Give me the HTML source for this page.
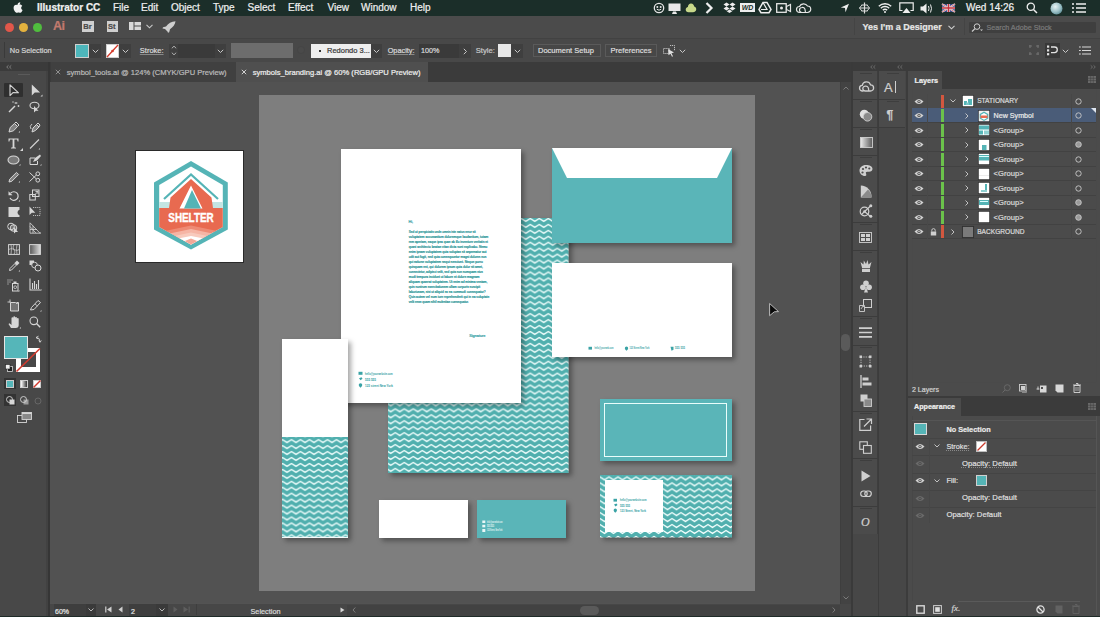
<!DOCTYPE html>
<html><head><meta charset="utf-8">
<style>
*{margin:0;padding:0;box-sizing:border-box}
html,body{width:1100px;height:617px;overflow:hidden;background:#535353;font-family:"Liberation Sans",sans-serif}
.a{position:absolute}
.t{position:absolute;white-space:nowrap;line-height:1;-webkit-text-stroke:0.22px}
svg{position:absolute;overflow:visible}
</style></head><body>
<!-- MENUBAR -->
<div class="a" style="left:0;top:0;width:1100px;height:15.6px;background:#1b2e29"></div>
<svg style="left:13px;top:2px" width="10" height="11" viewBox="0 0 10 11"><path d="M7.2 0.2c0.1 0.9-0.3 1.7-0.8 2.2-0.5 0.5-1.2 0.9-1.9 0.8-0.1-0.8 0.3-1.6 0.8-2.1 0.5-0.5 1.3-0.9 1.9-0.9zM9.3 3.9c-0.6 0.4-1.1 1.1-1.1 2 0 1.1 0.7 1.8 1.4 2.1-0.3 0.9-1.2 2.8-2.3 2.8-0.7 0-0.9-0.4-1.8-0.4s-1.1 0.4-1.8 0.4C2.6 10.8 0.6 8.6 0.6 5.8c0-2 1.3-3.1 2.6-3.1 0.8 0 1.3 0.4 1.8 0.4s1-0.5 1.9-0.5c0.6 0 1.6 0.3 2.4 1.3z" fill="#f2f2f2"/></svg>
<div class="t" style="left:37px;top:2.5px;font-size:10px;font-weight:bold;color:#f0f0f0">Illustrator CC</div>
<div class="t" style="left:113px;top:2.5px;font-size:10px;color:#eee">File</div>
<div class="t" style="left:141px;top:2.5px;font-size:10px;color:#eee">Edit</div>
<div class="t" style="left:171px;top:2.5px;font-size:10px;color:#eee">Object</div>
<div class="t" style="left:213px;top:2.5px;font-size:10px;color:#eee">Type</div>
<div class="t" style="left:247.5px;top:2.5px;font-size:10px;color:#eee">Select</div>
<div class="t" style="left:288px;top:2.5px;font-size:10px;color:#eee">Effect</div>
<div class="t" style="left:327.5px;top:2.5px;font-size:10px;color:#eee">View</div>
<div class="t" style="left:361px;top:2.5px;font-size:10px;color:#eee">Window</div>
<div class="t" style="left:410px;top:2.5px;font-size:10px;color:#eee">Help</div>
<!-- status icons -->
<svg style="left:653px;top:2px" width="12" height="12" viewBox="0 0 12 12"><circle cx="6" cy="6" r="4.7" fill="none" stroke="#e6e6e6" stroke-width="1.3"/><circle cx="4.3" cy="5" r="1" fill="#e6e6e6"/><circle cx="7.7" cy="5" r="1" fill="#e6e6e6"/><path d="M3.8 7.2q2.2 2 4.4 0" stroke="#e6e6e6" stroke-width="1" fill="none"/></svg>
<svg style="left:668px;top:2.5px" width="13" height="11" viewBox="0 0 13 11"><rect x="0.5" y="0.5" width="12" height="7.5" fill="#e8e8e8"/><path d="M4 11h5l-1-2.5h-3z" fill="#e8e8e8"/></svg>
<svg style="left:685px;top:2px" width="12" height="12" viewBox="0 0 12 12"><path d="M6 1.5c2 0 3 1.7 3.2 3 1.5 0.4 2.3 1.8 2 3.3-0.3 1.5-1.6 2.5-3.2 2.5H3.5C1.8 10.3 0.6 9 0.7 7.5 0.8 6 2 5.1 2.9 5 3 3 4.3 1.5 6 1.5z" fill="#c7d98a"/></svg>
<svg style="left:705px;top:2px" width="9" height="12" viewBox="0 0 9 12"><path d="M1.5 1l5 5-5 5" stroke="#f0f0f0" stroke-width="2.2" fill="none"/></svg>
<svg style="left:723px;top:2px" width="13" height="12" viewBox="0 0 13 12"><path d="M3.5 0.5l3 2-3 2-3-2zM9.5 0.5l3 2-3 2-3-2zM3.5 4.5l3 2-3 2-3-2zM9.5 4.5l3 2-3 2-3-2zM6.5 7.5l2.8 1.8-2.8 1.8-2.8-1.8z" fill="#eee"/></svg>
<svg style="left:740px;top:3px" width="15" height="9" viewBox="0 0 15 9"><rect x="0" y="0" width="15" height="9" fill="#eee"/><text x="7.5" y="7" font-family="Liberation Sans" font-size="7" font-weight="bold" font-style="italic" text-anchor="middle" fill="#1b2e29">WD</text></svg>
<svg style="left:759px;top:2px" width="12" height="11" viewBox="0 0 12 11"><path d="M4 0.5h4l4 7-2 3.2H2l-2-3.2z" fill="none" stroke="#eee" stroke-width="1.5"/><path d="M4 0.5l4 7H2" fill="none" stroke="#eee" stroke-width="1.2"/></svg>
<svg style="left:776px;top:3px" width="15" height="10" viewBox="0 0 15 10"><rect x="0.7" y="0.7" width="9.5" height="8.6" fill="none" stroke="#e6e6e6" stroke-width="1.3"/><circle cx="5.5" cy="5" r="1.5" fill="#e6e6e6"/><path d="M10.5 3.5l4-2v7l-4-2z" fill="none" stroke="#e6e6e6" stroke-width="1.2"/></svg>
<svg style="left:796px;top:2px" width="15" height="12" viewBox="0 0 15 12"><path d="M4.5 10.5H3.5A3 3 0 0 1 3.5 4.5A4.5 4.5 0 0 1 11.5 4A3.2 3.2 0 0 1 11.5 10.5H6A2.5 2.5 0 0 1 6 5.5A2.5 2.5 0 0 1 9 7.5L9.5 10.5" fill="none" stroke="#e6e6e6" stroke-width="1.2"/></svg>
<svg style="left:840px;top:2.5px" width="10" height="10" viewBox="0 0 10 10"><path d="M9 0.8L0.8 4.5l4.2 0.5 0.5 4.2z" fill="#eee"/></svg>
<svg style="left:859px;top:2px" width="11" height="12" viewBox="0 0 11 12"><path d="M5.5 0.5v11M0.5 6h10" stroke="#ddd" stroke-width="1.2"/><path d="M3 3l-2.5 3 2.5 3M8 3l2.5 3-2.5 3M2.5 3h6M2.5 9h6" stroke="#ddd" stroke-width="1" fill="none"/></svg>
<svg style="left:878px;top:2px" width="14" height="11" viewBox="0 0 14 11"><path d="M0.8 4.2A9 9 0 0 1 13.2 4.2M2.8 6.2A6.2 6.2 0 0 1 11.2 6.2M4.8 8.1A3.4 3.4 0 0 1 9.2 8.1" stroke="#eee" stroke-width="1.4" fill="none"/><circle cx="7" cy="10" r="1" fill="#eee"/></svg>
<svg style="left:899px;top:2px" width="15" height="12" viewBox="0 0 15 12"><path d="M3.5 8.5H0.8V0.8h13.4v7.7H11.5" stroke="#eee" stroke-width="1.2" fill="none"/><path d="M7.5 6l4 5h-8z" fill="#eee"/></svg>
<svg style="left:920px;top:2.5px" width="13" height="11" viewBox="0 0 13 11"><path d="M0.5 3.5h2.5l3.5-3v10l-3.5-3H0.5z" fill="#eee"/><path d="M8.5 3q1 2.5 0 5M10.5 1.5q2 4 0 8" stroke="#eee" stroke-width="1" fill="none"/></svg>
<svg style="left:942px;top:3.5px" width="13" height="8" viewBox="0 0 13 8"><rect width="13" height="8" fill="#3c4a8a"/><path d="M0 0L13 8M13 0L0 8" stroke="#f0f0f0" stroke-width="1.6"/><path d="M0 0L13 8M13 0L0 8" stroke="#c8303a" stroke-width="0.6"/><path d="M6.5 0v8M0 4h13" stroke="#f0f0f0" stroke-width="2.6"/><path d="M6.5 0v8M0 4h13" stroke="#c8303a" stroke-width="1.5"/></svg>
<div class="t" style="left:966px;top:2.5px;font-size:10px;color:#f0f0f0">Wed 14:26</div>
<svg style="left:1026px;top:2px" width="12" height="12" viewBox="0 0 12 12"><circle cx="4.8" cy="4.8" r="3.6" stroke="#eee" stroke-width="1.3" fill="none"/><path d="M7.5 7.5l3.5 3.5" stroke="#eee" stroke-width="1.5"/></svg>
<svg style="left:1050px;top:1.5px" width="13" height="13" viewBox="0 0 13 13"><defs><radialGradient id="sg" cx="0.4" cy="0.35" r="0.7"><stop offset="0" stop-color="#e9f3f4"/><stop offset="0.6" stop-color="#9dc2c8"/><stop offset="1" stop-color="#5f8f98"/></radialGradient></defs><circle cx="6.5" cy="6.5" r="6" fill="url(#sg)"/></svg>
<svg style="left:1072px;top:2.5px" width="14" height="10" viewBox="0 0 14 10"><path d="M0 1h2M0 5h2M0 9h2M4 1h10M4 5h10M4 9h10" stroke="#eee" stroke-width="1.5"/></svg>

<!-- TITLE BAR -->
<div class="a" style="left:0;top:15.6px;width:1100px;height:22.4px;background:#4b4b4b"></div>
<div class="a" style="left:5px;top:23px;width:9px;height:9px;border-radius:50%;background:#e2574a"></div>
<div class="a" style="left:19px;top:23px;width:9px;height:9px;border-radius:50%;background:#e4b23e"></div>
<div class="a" style="left:33px;top:23px;width:9px;height:9px;border-radius:50%;background:#50bd3e"></div>
<div class="t" style="left:53px;top:20px;font-size:12.5px;font-weight:bold;color:#c27a6e;letter-spacing:-0.5px">Ai</div>
<div class="a" style="left:82px;top:21px;width:11.5px;height:11px;background:#cfcfcf"></div>
<div class="t" style="left:83.3px;top:23.2px;font-size:7.5px;font-weight:bold;color:#4a4a4a">Br</div>
<div class="a" style="left:106.5px;top:21px;width:11.5px;height:11px;background:#cfcfcf"></div>
<div class="t" style="left:108px;top:23.2px;font-size:7.5px;font-weight:bold;color:#4a4a4a">St</div>
<svg style="left:129px;top:22px" width="12" height="8" viewBox="0 0 12 8"><rect x="0" y="0" width="4.5" height="8" fill="#d8d8d8"/><rect x="5.5" y="0" width="6.5" height="3.5" fill="#d8d8d8"/><rect x="5.5" y="4.5" width="6.5" height="3.5" fill="#d8d8d8"/></svg>
<svg style="left:146px;top:24px" width="7" height="5" viewBox="0 0 7 5"><path d="M0.5 0.8l3 3 3-3" stroke="#c8c8c8" stroke-width="1.1" fill="none"/></svg>
<svg style="left:162px;top:20.5px" width="14" height="12" viewBox="0 0 14 12"><path d="M13.5 0.3C9.5 0.6 6 2.5 4 5.5L1 6.2 0.5 7.5 3 8l2.5 2.5 0.5 1.2 1.2-0.5 0.8-3C11 6.2 13.2 3.5 13.5 0.3z" fill="#cfcfcf"/></svg>
<div class="a" style="left:854px;top:18px;width:1px;height:17px;background:#444"></div>
<div class="t" style="left:862.5px;top:22.6px;font-size:9px;font-weight:bold;color:#e6e6e6">Yes I&#39;m a Designer</div>
<svg style="left:948px;top:25px" width="7" height="5" viewBox="0 0 7 5"><path d="M0.5 0.8l3 3 3-3" stroke="#d0d0d0" stroke-width="1.1" fill="none"/></svg>
<div class="a" style="left:964px;top:18px;width:1px;height:17px;background:#444"></div>
<div class="a" style="left:969px;top:21.5px;width:127px;height:11px;background:#3f3f3f;border-radius:1px"></div>
<svg style="left:971px;top:22.5px" width="12" height="9" viewBox="0 0 12 9"><circle cx="6" cy="3.6" r="2.8" stroke="#cfcfcf" stroke-width="1" fill="none"/><path d="M4 5.6L1 8.5" stroke="#cfcfcf" stroke-width="1.2"/><path d="M9 6.5l1.5 1.5 1.5-1.5z" fill="#cfcfcf"/></svg>
<div class="t" style="left:986.5px;top:23.5px;font-size:7.2px;color:#7a7a7a">Search Adobe Stock</div>

<!-- CONTROL BAR -->
<div class="a" style="left:0;top:38px;width:1100px;height:24px;background:#484848;border-top:1px solid #424242"></div>
<div class="a" style="left:4px;top:42px;width:1px;height:16px;background:#3a3a3a"></div>
<div class="t" style="left:9.8px;top:47px;font-size:7.4px;color:#d4d4d4">No Selection</div>
<div class="a" style="left:75px;top:43.5px;width:14px;height:14px;background:#4db6bb;border:1px solid #cfcfcf"></div>
<div class="a" style="left:89px;top:43.5px;width:11.5px;height:14px;background:#3f3f3f"></div>
<svg style="left:91.5px;top:48.5px" width="7" height="5" viewBox="0 0 7 5"><path d="M0.8 0.8l2.7 2.7 2.7-2.7" stroke="#c8c8c8" stroke-width="1" fill="none"/></svg>
<div class="a" style="left:106px;top:43.5px;width:13px;height:14px;background:#fff;border:1px solid #cfcfcf"></div>
<svg style="left:106px;top:43.5px" width="13" height="14" viewBox="0 0 13 14"><path d="M1 13L12 1" stroke="#d43a2a" stroke-width="1.3"/><circle cx="6.5" cy="7" r="1.3" fill="#d43a2a"/></svg>
<div class="a" style="left:119px;top:43.5px;width:12px;height:14px;background:#3f3f3f"></div>
<svg style="left:122px;top:48.5px" width="7" height="5" viewBox="0 0 7 5"><path d="M0.8 0.8l2.7 2.7 2.7-2.7" stroke="#c8c8c8" stroke-width="1" fill="none"/></svg>
<div class="t" style="left:139.8px;top:47px;font-size:7.5px;color:#d8d8d8;text-decoration:underline;text-decoration-color:#888">Stroke:</div>
<div class="a" style="left:168.5px;top:43.5px;width:9.5px;height:14px;background:#3f3f3f"></div>
<svg style="left:170.5px;top:45px" width="6" height="11" viewBox="0 0 6 11"><path d="M0.8 3.3L3 1.2 5.2 3.3M0.8 7.7L3 9.8 5.2 7.7" stroke="#bdbdbd" stroke-width="0.9" fill="none"/></svg>
<div class="a" style="left:178px;top:43.5px;width:37px;height:14px;background:#3a3a3a"></div>
<div class="a" style="left:215px;top:43.5px;width:11px;height:14px;background:#3f3f3f"></div>
<svg style="left:217px;top:48.5px" width="7" height="5" viewBox="0 0 7 5"><path d="M0.8 0.8l2.7 2.7 2.7-2.7" stroke="#c8c8c8" stroke-width="1" fill="none"/></svg>
<div class="a" style="left:231px;top:43px;width:62px;height:14.5px;background:#6d6d6d"></div>
<div class="a" style="left:297px;top:46px;width:8px;height:8px;border-radius:50%;background:#4a4a4a;border:1px solid #454545"></div>
<div class="a" style="left:310.5px;top:43.5px;width:60px;height:14px;background:#eeeeee"></div>
<div class="a" style="left:319px;top:50px;width:1.5px;height:1.5px;background:#333"></div>
<div class="t" style="left:327px;top:47.2px;font-size:7.5px;color:#3a3a3a">Redondo 3...</div>
<div class="a" style="left:370.5px;top:43.5px;width:11px;height:14px;background:#3f3f3f"></div>
<svg style="left:372.5px;top:48.5px" width="7" height="5" viewBox="0 0 7 5"><path d="M0.8 0.8l2.7 2.7 2.7-2.7" stroke="#c8c8c8" stroke-width="1" fill="none"/></svg>
<div class="t" style="left:387.7px;top:47px;font-size:7.3px;color:#d8d8d8;text-decoration:underline;text-decoration-color:#888">Opacity:</div>
<div class="a" style="left:418.5px;top:43.5px;width:40.5px;height:14px;background:#3a3a3a"></div>
<div class="t" style="left:421px;top:47.2px;font-size:7.2px;color:#d8d8d8">100%</div>
<div class="a" style="left:459px;top:43.5px;width:12px;height:14px;background:#3f3f3f"></div>
<svg style="left:463px;top:47.5px" width="5" height="7" viewBox="0 0 5 7"><path d="M0.8 0.8l2.7 2.7-2.7 2.7" stroke="#c8c8c8" stroke-width="1" fill="none"/></svg>
<div class="t" style="left:475.8px;top:47px;font-size:7.6px;color:#c8c8c8">Style:</div>
<div class="a" style="left:497.5px;top:44px;width:13.5px;height:13px;background:#e8e8e8"></div>
<div class="a" style="left:511px;top:43.5px;width:12px;height:14px;background:#3f3f3f"></div>
<svg style="left:514px;top:48.5px" width="7" height="5" viewBox="0 0 7 5"><path d="M0.8 0.8l2.7 2.7 2.7-2.7" stroke="#c8c8c8" stroke-width="1" fill="none"/></svg>
<div class="a" style="left:532.5px;top:44px;width:68px;height:12.5px;border:1px solid #5a5a5a;background:#474747"></div>
<div class="t" style="left:538px;top:47.3px;font-size:7.5px;color:#dcdcdc">Document Setup</div>
<div class="a" style="left:604.5px;top:44px;width:52px;height:12.5px;border:1px solid #5a5a5a;background:#474747"></div>
<div class="t" style="left:610.5px;top:47.3px;font-size:7.6px;color:#dcdcdc">Preferences</div>
<svg style="left:663px;top:43.5px" width="13" height="13" viewBox="0 0 13 13"><path d="M0.5 4.5h6v5h-6z" stroke="#cfcfcf" stroke-width="0.9" fill="none" stroke-dasharray="1.2 0.8"/><path d="M7 1.5h4.5v5" stroke="#cfcfcf" stroke-width="0.9" fill="none" stroke-dasharray="1.2 0.8"/><path d="M5 5l6 3.5-2.5 0.8 1.5 3-1 0.5-1.5-3-2 1.5z" fill="#e0e0e0"/></svg>
<svg style="left:678.5px;top:48.5px" width="7" height="5" viewBox="0 0 7 5"><path d="M0.8 0.8l2.7 2.7 2.7-2.7" stroke="#c8c8c8" stroke-width="1" fill="none"/></svg>
<svg style="left:1029px;top:45px" width="10" height="10" viewBox="0 0 10 10"><path d="M0 1h3M7 1h3M0 9h3M7 9h3M1 0v3M9 0v3M1 7v3M9 7v3" stroke="#707070" stroke-width="1.2"/></svg>
<div class="a" style="left:1044.5px;top:42.5px;width:15.5px;height:15px;background:#383838"></div>
<svg style="left:1046px;top:44.5px" width="12" height="11" viewBox="0 0 12 11"><rect x="1" y="0.5" width="2.2" height="2.2" fill="#e0e0e0"/><rect x="1" y="4.3" width="2.2" height="2.2" fill="#e0e0e0"/><rect x="1" y="8.1" width="2.2" height="2.2" fill="#e0e0e0"/><path d="M5 2h3.5a2.8 2.8 0 0 1 0 5.6H5" stroke="#e0e0e0" stroke-width="1.3" fill="none"/></svg>
<svg style="left:1061.5px;top:48.5px" width="7" height="5" viewBox="0 0 7 5"><path d="M0.8 0.8l2.7 2.7 2.7-2.7" stroke="#c8c8c8" stroke-width="1" fill="none"/></svg>
<svg style="left:1079px;top:45.5px" width="12" height="9" viewBox="0 0 12 9"><path d="M0 1h1.8M0 4.5h1.8M0 8h1.8M3 1h9M3 4.5h9M3 8h9" stroke="#d8d8d8" stroke-width="1.2"/></svg>

<!-- TAB STRIP -->
<div class="a" style="left:0;top:62px;width:853px;height:20.3px;background:#3b3b3b"></div>
<div class="a" style="left:51px;top:62px;width:184.5px;height:20px;background:#404040"></div>
<svg style="left:54.5px;top:69px" width="6" height="6" viewBox="0 0 6 6"><path d="M0.8 0.8l4.4 4.4M5.2 0.8L0.8 5.2" stroke="#999" stroke-width="0.9"/></svg>
<div class="t" style="left:66.8px;top:69px;font-size:7.57px;color:#b9b9b9">symbol_tools.ai @ 124% (CMYK/GPU Preview)</div>
<div class="a" style="left:235.7px;top:62px;width:192px;height:20px;background:#4f4f4f"></div>
<svg style="left:241px;top:69px" width="6" height="6" viewBox="0 0 6 6"><path d="M0.8 0.8l4.4 4.4M5.2 0.8L0.8 5.2" stroke="#e0e0e0" stroke-width="0.9"/></svg>
<div class="t" style="left:252.7px;top:69px;font-size:7.59px;color:#ececec">symbols_branding.ai @ 60% (RGB/GPU Preview)</div>

<!-- TOOLBAR -->
<div class="a" style="left:0;top:62px;width:49px;height:555px;background:#484848"></div>
<div class="a" style="left:0;top:62px;width:49px;height:9px;background:#3b3b3b"></div>
<svg style="left:5.5px;top:64.5px" width="6" height="4" viewBox="0 0 6 4"><path d="M2.5 0.3L0.7 2 2.5 3.7M5.3 0.3L3.5 2 5.3 3.7" stroke="#9a9a9a" stroke-width="0.7" fill="none"/></svg>
<div class="a" style="left:46px;top:71px;width:3px;height:546px;background:#424242"></div>
<div class="a" style="left:48px;top:62px;width:2px;height:555px;background:#363636"></div>
<div class="a" style="left:18px;top:74px;width:12px;height:1px;background:#5a5a5a"></div>
<div class="a" style="left:4px;top:82.5px;width:18.5px;height:14.5px;background:#2f2f2f;border-radius:1px"></div>
<!-- row1 select -->
<svg style="left:9px;top:84px" width="12" height="13" viewBox="0 0 12 13"><path d="M1 0.8v10.8l3-3 5.5 0.2z" stroke="#d6d6d6" stroke-width="1.1" fill="none" stroke-linejoin="round"/></svg>
<svg style="left:30.5px;top:84px" width="12" height="13" viewBox="0 0 12 13"><path d="M0.8 0.5v11l3-3 5.3 0.1z" fill="#d6d6d6"/><path d="M9.5 12.5h2V10.5z" fill="#d6d6d6"/></svg>
<!-- row2 magic wand, lasso -->
<svg style="left:8px;top:101px" width="12" height="12" viewBox="0 0 12 12"><path d="M1 11L7 5" stroke="#d6d6d6" stroke-width="1.5"/><path d="M8 1v2M6.5 2h3M10.5 4v2M9.5 5h2M5 0.5v1M4.5 1h1" stroke="#d6d6d6" stroke-width="0.8"/></svg>
<svg style="left:29px;top:101px" width="12" height="12" viewBox="0 0 12 12"><ellipse cx="5.5" cy="4.5" rx="4.5" ry="3.3" stroke="#d6d6d6" stroke-width="1.1" fill="none"/><path d="M5 5v6.5l1.8-1.8 2.7 0.1z" fill="#d6d6d6"/></svg>
<!-- row3 pen, curvature -->
<svg style="left:8px;top:121px" width="12" height="12" viewBox="0 0 12 12"><path d="M1 11L2.2 6.5 6.5 2.5 9.5 5.5 5.5 9.8z" stroke="#d6d6d6" stroke-width="1" fill="#d6d6d6" fill-opacity="0.4"/><path d="M6.5 2.5L8 1l3 3-1.5 1.5" stroke="#d6d6d6" stroke-width="1" fill="none"/><path d="M10.5 11.5h1.5V10z" fill="#d6d6d6"/></svg>
<svg style="left:29px;top:121px" width="12" height="12" viewBox="0 0 12 12"><path d="M3 11L4 7 7.5 3.5 10 6 6.5 9.5z" stroke="#d6d6d6" stroke-width="1" fill="#d6d6d6" fill-opacity="0.4"/><path d="M7.5 3.5L9 2l2 2-1 2" stroke="#d6d6d6" stroke-width="1" fill="none"/><path d="M3 3q-3 2 -1 5" stroke="#d6d6d6" stroke-width="0.9" fill="none"/></svg>
<!-- row4 type, line -->
<svg style="left:8px;top:138px" width="11" height="11" viewBox="0 0 11 11"><path d="M0.5 0.5h10v3h-0.9l-0.5-1.9H6.4v7.6l1.6 0.5V10.5H3v-0.8l1.6-0.5V1.6H1.9L1.4 3.5H0.5z" fill="#d6d6d6"/></svg>
<svg style="left:19.5px;top:147.5px" width="3" height="3" viewBox="0 0 3 3"><path d="M0 3h3V0z" fill="#d6d6d6"/></svg>
<svg style="left:29px;top:138px" width="12" height="12" viewBox="0 0 12 12"><path d="M1 10.5L10 1.5" stroke="#d6d6d6" stroke-width="1.1"/><path d="M9.5 11.5h1.5V10z" fill="#d6d6d6"/></svg>
<!-- row5 ellipse, shaper -->
<svg style="left:7px;top:154.5px" width="14" height="11" viewBox="0 0 14 11"><ellipse cx="6.5" cy="5" rx="5.5" ry="4" stroke="#d6d6d6" stroke-width="1.1" fill="#d6d6d6" fill-opacity="0.35"/><path d="M12 10.5h1.5V9z" fill="#d6d6d6"/></svg>
<svg style="left:29px;top:153.5px" width="13" height="12" viewBox="0 0 13 12"><path d="M1 4h5M1 4v6.5h7.5V7" stroke="#d6d6d6" stroke-width="1" fill="none"/><path d="M4 8l2-4 5-3.5 1 1.5-4 4.5z" fill="#d6d6d6"/><path d="M11 11.5h1.5V10z" fill="#d6d6d6"/></svg>
<!-- row6 pencil, scissors -->
<svg style="left:8px;top:170.5px" width="12" height="12" viewBox="0 0 12 12"><path d="M1 11l0.7-2.8L8.5 1.4 10.6 3.5 3.8 10.3z" stroke="#d6d6d6" stroke-width="1" fill="#d6d6d6" fill-opacity="0.4"/><path d="M10.5 11.5h1.5V10z" fill="#d6d6d6"/></svg>
<svg style="left:29px;top:170.5px" width="12" height="12" viewBox="0 0 12 12"><circle cx="8.8" cy="2.8" r="1.9" stroke="#d6d6d6" stroke-width="1" fill="none"/><circle cx="8.8" cy="9.2" r="1.9" stroke="#d6d6d6" stroke-width="1" fill="none"/><path d="M0.5 1.5L7.3 7.9M0.5 10.5L7.3 4.1" stroke="#d6d6d6" stroke-width="1"/></svg>
<!-- row7 rotate, scale -->
<svg style="left:8px;top:189.5px" width="12" height="12" viewBox="0 0 12 12"><path d="M2.6 3.2A4.3 4.3 0 1 1 2 8" stroke="#d6d6d6" stroke-width="1.2" fill="none"/><path d="M0.5 1.2v4h4z" fill="#d6d6d6"/><path d="M10.5 11.5h1.5V10z" fill="#d6d6d6"/></svg>
<svg style="left:29px;top:189px" width="12" height="12" viewBox="0 0 12 12"><rect x="0.8" y="5.5" width="5.5" height="5.5" stroke="#d6d6d6" stroke-width="1" fill="none"/><rect x="3.5" y="1" width="6.5" height="6.5" stroke="#d6d6d6" stroke-width="1" fill="none"/><path d="M5 6.5l4-4M6.5 2.5h2.5v2.5" stroke="#d6d6d6" stroke-width="0.9" fill="none"/></svg>
<!-- row8 warp, free transform -->
<svg style="left:7.5px;top:206px" width="12" height="11" viewBox="0 0 12 11"><path d="M0.5 1h11v2.8q-2 0.4-2 2.7t2 2.7V11H0.5z" fill="#d6d6d6"/></svg>
<svg style="left:29px;top:206px" width="12" height="12" viewBox="0 0 12 12"><path d="M0.5 0.5v8.5l2.3-2.3 3.5 0.1z" fill="#d6d6d6"/><path d="M4 1.5h7v8h-7" stroke="#d6d6d6" stroke-width="0.8" fill="none" stroke-dasharray="1.2 0.9"/></svg>
<!-- row9 shape builder, perspective -->
<svg style="left:7px;top:222px" width="13" height="12" viewBox="0 0 13 12"><circle cx="4" cy="4.5" r="3.3" stroke="#d6d6d6" stroke-width="1" fill="none"/><circle cx="6.5" cy="6" r="3.3" stroke="#d6d6d6" stroke-width="1" fill="#d6d6d6" fill-opacity="0.3"/><path d="M7 5v6.5l1.6-1.6 2.4 0.1z" fill="#d6d6d6"/></svg>
<svg style="left:29px;top:222px" width="12" height="12" viewBox="0 0 12 12"><path d="M1 0.8v10.4h10L1 0.8zM1 4.5l6 6.7M4 3.8v7.4M1 7.5h7" stroke="#d6d6d6" stroke-width="0.8" fill="none"/><path d="M10.5 11.5h1.5V10z" fill="#d6d6d6"/></svg>
<!-- row10 mesh, gradient -->
<svg style="left:8px;top:243.5px" width="12" height="11" viewBox="0 0 12 11"><rect x="0.6" y="0.6" width="10.8" height="9.8" stroke="#d6d6d6" stroke-width="1" fill="none"/><path d="M0.6 5.5q3-2 5.5 0t5.3 0M6 0.6q-2 2.5 0 5t0 4.8M3 0.6q1 3 0 9.8M9 0.6q-1 3 0 9.8" stroke="#d6d6d6" stroke-width="0.7" fill="none"/></svg>
<svg style="left:29px;top:243.5px" width="12" height="11" viewBox="0 0 12 11"><defs><linearGradient id="tg1"><stop offset="0" stop-color="#555"/><stop offset="1" stop-color="#ddd"/></linearGradient></defs><rect x="0.6" y="0.6" width="10.8" height="9.8" stroke="#d6d6d6" stroke-width="1" fill="url(#tg1)"/></svg>
<!-- row11 eyedropper, blend -->
<svg style="left:8px;top:260px" width="12" height="12" viewBox="0 0 12 12"><path d="M1.5 10.5l0.5-2 5-5 1.5 1.5-5 5z" stroke="#d6d6d6" stroke-width="1" fill="none"/><path d="M6.5 3l2.5-2.5 2.5 2.5L9 5.5z" fill="#d6d6d6"/><path d="M10.5 11.5h1.5V10z" fill="#d6d6d6"/></svg>
<svg style="left:29px;top:260px" width="13" height="12" viewBox="0 0 13 12"><rect x="0.5" y="0.5" width="4.5" height="4.5" fill="#d6d6d6"/><circle cx="5.5" cy="5" r="2.8" stroke="#d6d6d6" stroke-width="0.9" fill="#484848"/><circle cx="9" cy="8" r="3" stroke="#d6d6d6" stroke-width="1" fill="#484848"/></svg>
<!-- row12 symbol sprayer, graph -->
<svg style="left:7px;top:278.5px" width="13" height="13" viewBox="0 0 13 13"><path d="M0.5 1h1M2.5 1h1M4.5 1h1M0.5 3h1M2.5 3h1M0.5 5h1" stroke="#d6d6d6" stroke-width="1"/><rect x="5.5" y="4.5" width="5.5" height="7.5" stroke="#d6d6d6" stroke-width="1" fill="none"/><rect x="6.5" y="2.5" width="3" height="2" fill="#d6d6d6"/><circle cx="8.2" cy="8.2" r="1.4" stroke="#d6d6d6" stroke-width="0.8" fill="none"/><path d="M11 12.5h1.5V11z" fill="#d6d6d6"/></svg>
<svg style="left:29px;top:278px" width="13" height="13" viewBox="0 0 13 13"><path d="M1 0.5v11.5h10.5M3.5 11V5M5.5 11V3M7.5 11V6M9.5 11V2" stroke="#d6d6d6" stroke-width="1.1" fill="none"/><path d="M11 12.5h1.5V11z" fill="#d6d6d6"/></svg>
<!-- row13 artboard, slice -->
<svg style="left:6.5px;top:298.5px" width="14" height="13" viewBox="0 0 14 13"><path d="M0.5 3h3M3 0.5v3" stroke="#d6d6d6" stroke-width="0.9"/><path d="M3.5 3.5h5q1.5 0 1.5 1.5v-1.5h1.5v8.5H3.5z" stroke="#d6d6d6" stroke-width="1" fill="#d6d6d6" fill-opacity="0.3"/></svg>
<svg style="left:29px;top:298.5px" width="13" height="13" viewBox="0 0 13 13"><path d="M1.5 11l1-2.5 6.5-7 2.5 2-6.5 7z" stroke="#d6d6d6" stroke-width="1" fill="none"/><path d="M6 5l2.5 2" stroke="#d6d6d6" stroke-width="0.8"/><path d="M11 12.5h1.5V11z" fill="#d6d6d6"/></svg>
<!-- row14 hand, zoom -->
<svg style="left:7.5px;top:315.5px" width="13" height="13" viewBox="0 0 13 13"><path d="M3 12l-2.5-4 1-0.8 2 1.8V2.2a0.9 0.9 0 0 1 1.8 0V6V1.2a0.9 0.9 0 0 1 1.8 0V6V1.8a0.9 0.9 0 0 1 1.8 0V6.5V3a0.9 0.9 0 0 1 1.8 0V9q0 3-3 3z" fill="#d6d6d6"/><path d="M11.5 12.5h1.5V11z" fill="#d6d6d6"/></svg>
<svg style="left:29px;top:315.5px" width="12" height="12" viewBox="0 0 12 12"><circle cx="4.8" cy="4.8" r="3.8" stroke="#d6d6d6" stroke-width="1.1" fill="none"/><path d="M7.5 7.5l3.7 3.7" stroke="#d6d6d6" stroke-width="1.4"/></svg>
<!-- colors -->
<svg style="left:35px;top:336px" width="7" height="7" viewBox="0 0 7 7"><path d="M1 1.5q4 0 4 4M3.5 0.2L1 1.5 3.2 3M3.8 4.5l1.2 1.8 1.3-1.8" stroke="#d6d6d6" stroke-width="0.9" fill="none"/></svg>
<div class="a" style="left:16.2px;top:347.5px;width:24.3px;height:24px;background:#fff"></div>
<div class="a" style="left:21px;top:352.3px;width:14.7px;height:14.4px;background:#484848"></div>
<svg style="left:16.2px;top:347.5px" width="25" height="24" viewBox="0 0 25 24"><path d="M0.5 23.5L24 0.5" stroke="#d23a2e" stroke-width="1.6"/></svg>
<div class="a" style="left:4.2px;top:335.5px;width:23.8px;height:23.2px;background:#55b6b9;border:1px solid #e6e6e6"></div>
<svg style="left:4.5px;top:363.5px" width="8" height="8" viewBox="0 0 8 8"><rect x="2.5" y="2.5" width="5" height="5" fill="#222" stroke="#d6d6d6" stroke-width="0.8"/><rect x="0.5" y="0.5" width="4.5" height="4.5" fill="#f0f0f0" stroke="#222" stroke-width="0.6"/></svg>
<div class="a" style="left:4.2px;top:377.5px;width:11.5px;height:11.5px;background:#333"></div>
<div class="a" style="left:6px;top:379.5px;width:8px;height:8px;background:#55b6b9;border:0.5px solid #ccc"></div>
<div class="a" style="left:19.8px;top:379.5px;width:8px;height:8px;background:linear-gradient(90deg,#fff,#333);border:0.5px solid #ccc"></div>
<div class="a" style="left:33.4px;top:379.5px;width:8px;height:8px;background:#fff;border:0.5px solid #ccc"></div>
<svg style="left:33.4px;top:379.5px" width="8" height="8" viewBox="0 0 8 8"><path d="M0.5 7.5L7.5 0.5" stroke="#d23a2e" stroke-width="1.4"/></svg>
<div class="a" style="left:4.2px;top:394px;width:12px;height:12px;background:#333"></div>
<svg style="left:6px;top:396px" width="9" height="9" viewBox="0 0 9 9"><circle cx="3.5" cy="3.5" r="3" stroke="#d6d6d6" stroke-width="0.9" fill="none"/><rect x="3.5" y="3.5" width="5" height="5" fill="#d6d6d6"/></svg>
<svg style="left:19.5px;top:396px" width="9" height="9" viewBox="0 0 9 9"><circle cx="3.5" cy="3.5" r="3" stroke="#d6d6d6" stroke-width="0.9" fill="none"/><rect x="3.5" y="3.5" width="5" height="5" fill="#d6d6d6" fill-opacity="0.6"/></svg>
<svg style="left:33.5px;top:396.5px" width="8" height="8" viewBox="0 0 8 8"><circle cx="4" cy="4" r="3" stroke="#6a6a6a" stroke-width="0.9" fill="none"/></svg>
<svg style="left:17px;top:412px" width="15" height="11" viewBox="0 0 15 11"><rect x="0.5" y="3.5" width="9" height="7" stroke="#d6d6d6" stroke-width="0.9" fill="#484848"/><rect x="5" y="0.5" width="9.5" height="7" stroke="#d6d6d6" stroke-width="0.9" fill="#8a8a8a"/><rect x="5" y="0.5" width="9.5" height="1.5" fill="#d6d6d6"/></svg>

<!-- CANVAS -->
<div class="a" style="left:50px;top:82.3px;width:790px;height:521px;background:#525252"></div>
<div class="a" style="left:259px;top:95px;width:496px;height:496px;background:#7e7e7e"></div>
<!-- symbol preview -->
<div class="a" style="left:135px;top:149.5px;width:108.6px;height:113px;background:#fff;border:1px solid #2a2a2a"></div>
<svg style="left:145px;top:155px" width="95" height="100" viewBox="145 155 95 100">
<defs><clipPath id="hexin"><path d="M191 166.5L222.8 185V227L191 244.5 159.2 227V185z"/></clipPath></defs>
<path d="M191 161L227.8 182.5V229.5L191 249.5 154 229.5V182.5z" fill="#55b4b6"/>
<path d="M191 166.5L222.8 185V227L191 244.5 159.2 227V185z" fill="#fff"/>
<g clip-path="url(#hexin)">
<rect x="150" y="202" width="80" height="6" fill="#c4e5e3"/>
<path d="M191 179L170.5 197.5 169 208 150 208V232H232V208L213 208 211.5 197.5z" fill="#e86a50"/>
<path d="M164 199L191 174.5 218 199" stroke="#55b4b6" stroke-width="2.2" fill="none"/>
<path d="M191 185.5L179.5 208.5H202.5z" fill="#fff"/>
<path d="M192 190L184 208.5H201z" fill="#55b4b6"/>
<path d="M150 234L191 225.5 232 234V250H150z" fill="#ee8a74"/>
<path d="M150 237.5L191 229 232 237.5V250H150z" fill="#f6b5a5"/>
<path d="M150 241L191 232.5 232 241V250H150z" fill="#f8cabd"/>
<path d="M150 244L191 236 232 244V250H150z" fill="#fff"/>
<path d="M175 245L191 238.5 207 245 191 251z" fill="#f3a898"/>
</g>
<text x="191" y="222.3" text-anchor="middle" font-family="Liberation Sans" font-weight="bold" font-size="13" fill="#fff" stroke="#fff" stroke-width="0.4" transform="translate(191 0) scale(0.76 1) translate(-191 0)">SHELTER</text>
</svg>
<!-- big zigzag -->
<div class="a" style="left:388px;top:218px;width:180.5px;height:255px;box-shadow:3px 3px 5px rgba(0,0,0,0.35)"></div>
<svg style="left:388px;top:218px" width="180.5" height="255" viewBox="0 0 180.5 255"><defs><pattern id="z1" patternUnits="userSpaceOnUse" width="9" height="5.95" x="-1.7" y="-1"><rect width="9" height="6" fill="#50afae"/><path d="M-4.5 4.3L0 1.5 4.5 4.3 9 1.5 13.5 4.3" stroke="#f2fffe" stroke-width="1.35" fill="none"/></pattern></defs><rect width="180.5" height="255" fill="url(#z1)"/></svg>
<!-- letterhead -->
<div class="a" style="left:341.3px;top:148.7px;width:180px;height:254px;background:#fff;box-shadow:3px 3px 5px rgba(0,0,0,0.35)"></div>
<div class="t" style="left:408.5px;top:220.5px;font-size:3.8px;color:#3aa3a6">Hi,</div>

<svg style="left:0;top:0" width="1100" height="617" viewBox="0 0 1100 617"><g font-family="Liberation Sans" font-size="3.4" fill="#2a9597" stroke="#2a9597" stroke-width="0.22"><text x="408.75" y="233.00" textLength="66.9" lengthAdjust="spacingAndGlyphs">Sed ut perspiciatis unde omnis iste natus error sit</text><text x="408.75" y="237.97" textLength="79.4" lengthAdjust="spacingAndGlyphs">voluptatem accusantium doloremque laudantium, totam</text><text x="408.75" y="242.94" textLength="79.1" lengthAdjust="spacingAndGlyphs">rem aperiam, eaque ipsa quae ab illo inventore veritatis et</text><text x="408.75" y="247.91" textLength="78.6" lengthAdjust="spacingAndGlyphs">quasi architecto beatae vitae dicta sunt explicabo. Nemo</text><text x="408.75" y="252.88" textLength="77.6" lengthAdjust="spacingAndGlyphs">enim ipsam voluptatem quia voluptas sit aspernatur aut</text><text x="408.75" y="257.85" textLength="77.6" lengthAdjust="spacingAndGlyphs">odit aut fugit, sed quia consequuntur magni dolores eos</text><text x="408.75" y="262.82" textLength="74.1" lengthAdjust="spacingAndGlyphs">qui ratione voluptatem sequi nesciunt. Neque porro</text><text x="408.75" y="267.79" textLength="74.1" lengthAdjust="spacingAndGlyphs">quisquam est, qui dolorem ipsum quia dolor sit amet,</text><text x="408.75" y="272.76" textLength="74.1" lengthAdjust="spacingAndGlyphs">consectetur, adipisci velit, sed quia non numquam eius</text><text x="408.75" y="277.73" textLength="70.6" lengthAdjust="spacingAndGlyphs">modi tempora incidunt ut labore et dolore magnam</text><text x="408.75" y="282.70" textLength="78.6" lengthAdjust="spacingAndGlyphs">aliquam quaerat voluptatem. Ut enim ad minima veniam,</text><text x="408.75" y="287.67" textLength="71.4" lengthAdjust="spacingAndGlyphs">quis nostrum exercitationem ullam corporis suscipit</text><text x="408.75" y="292.64" textLength="76.8" lengthAdjust="spacingAndGlyphs">laboriosam, nisi ut aliquid ex ea commodi consequatur?</text><text x="408.75" y="297.61" textLength="80.4" lengthAdjust="spacingAndGlyphs">Quis autem vel eum iure reprehenderit qui in ea voluptate</text><text x="408.75" y="302.58" textLength="59.9" lengthAdjust="spacingAndGlyphs">velit esse quam nihil molestiae consequatur.</text></g></svg>
<div class="t" style="left:469.2px;top:334.6px;font-size:3.8px;color:#3aa3a6">Signature</div>
<svg style="left:357.5px;top:371px" width="5" height="17" viewBox="0 0 5 17"><rect x="0.5" y="0.8" width="4" height="3" fill="#3aa3a6"/><path d="M1 7.2l2.5-1 1 1.5-2 1.5z" fill="#3aa3a6"/><path d="M2.5 12.2a1.8 1.8 0 0 1 1.8 1.8q0 1-1.8 2.8-1.8-1.8-1.8-2.8a1.8 1.8 0 0 1 1.8-1.8z" fill="#3aa3a6"/></svg>
<!-- vertical card -->
<div class="a" style="left:282px;top:338.5px;width:66px;height:199px;background:#fff;box-shadow:3px 3px 5px rgba(0,0,0,0.35)"></div>
<svg style="left:282px;top:437.4px" width="66" height="100.1" viewBox="0 0 66 100.1"><defs><pattern id="z2" patternUnits="userSpaceOnUse" width="9" height="5.95" x="0.5" y="1.2"><rect width="9" height="6" fill="#50afae"/><path d="M-4.5 4.3L0 1.5 4.5 4.3 9 1.5 13.5 4.3" stroke="#f2fffe" stroke-width="1.35" fill="none"/></pattern></defs><rect width="66" height="100.1" fill="url(#z2)"/></svg>
<!-- envelope teal -->
<div class="a" style="left:551.8px;top:148.2px;width:180px;height:94.5px;background:#5ab5b8;box-shadow:3px 3px 5px rgba(0,0,0,0.35)"></div>
<svg style="left:551.8px;top:148.2px" width="180" height="31" viewBox="0 0 180 31"><path d="M0 0H180L165 30H15z" fill="#fff"/></svg>
<!-- envelope white -->
<div class="a" style="left:552px;top:262.6px;width:180.2px;height:94.4px;background:#fff;box-shadow:3px 3px 5px rgba(0,0,0,0.35)"></div>
<svg style="left:588px;top:345.5px" width="90" height="5" viewBox="0 0 90 5"><rect x="0.5" y="0.8" width="3.5" height="2.8" fill="#3aa3a6"/><path d="M38.5 0.5a1.7 1.7 0 0 1 1.7 1.7q0 1-1.7 2.6-1.7-1.6-1.7-2.6a1.7 1.7 0 0 1 1.7-1.7z" fill="#3aa3a6"/><path d="M82.5 0.8l3 0 0 3-2 1z" fill="#3aa3a6"/></svg>
<!-- white card -->
<div class="a" style="left:379.2px;top:500px;width:89.1px;height:37.7px;background:#fff;box-shadow:3px 3px 5px rgba(0,0,0,0.35)"></div>
<!-- teal card -->
<div class="a" style="left:476.5px;top:500px;width:89.5px;height:37.7px;background:#5ab5b8;box-shadow:3px 3px 5px rgba(0,0,0,0.35)"></div>
<svg style="left:482px;top:519.5px" width="4" height="13" viewBox="0 0 4 13"><rect x="0.3" y="0.5" width="3" height="2.5" fill="#eaf7f7"/><rect x="0.3" y="4.8" width="3" height="2.5" fill="#eaf7f7"/><rect x="0.3" y="9" width="3" height="3" fill="#eaf7f7"/></svg>
<!-- bordered teal card -->
<div class="a" style="left:599.8px;top:398.5px;width:132px;height:62.7px;background:#5ab5b8;box-shadow:3px 3px 5px rgba(0,0,0,0.35)"></div>
<div class="a" style="left:604.3px;top:402.8px;width:122.9px;height:54.1px;border:1.5px solid #e9fdfb"></div>
<!-- zigzag card -->
<div class="a" style="left:600px;top:474.8px;width:132px;height:62.5px;box-shadow:3px 3px 5px rgba(0,0,0,0.35)"></div>
<svg style="left:600px;top:474.8px" width="132" height="62.5" viewBox="0 0 132 62.5"><defs><pattern id="z3" patternUnits="userSpaceOnUse" width="9" height="5.95" x="0" y="0.5"><rect width="9" height="6" fill="#50afae"/><path d="M-4.5 4.3L0 1.5 4.5 4.3 9 1.5 13.5 4.3" stroke="#f2fffe" stroke-width="1.35" fill="none"/></pattern></defs><rect width="132" height="62.5" fill="url(#z3)"/></svg>
<div class="a" style="left:604.7px;top:480.3px;width:58.3px;height:51.5px;background:#fff"></div>
<svg style="left:612.5px;top:497.5px" width="5" height="15" viewBox="0 0 5 15"><rect x="0.5" y="0.8" width="3.5" height="2.8" fill="#3aa3a6"/><path d="M1 6.5l2.5-1 1 1.5-2 1.5z" fill="#3aa3a6"/><path d="M2.3 10.5a1.7 1.7 0 0 1 1.7 1.7q0 1-1.7 2.6-1.7-1.6-1.7-2.6a1.7 1.7 0 0 1 1.7-1.7z" fill="#3aa3a6"/></svg>

<!-- SCROLLBARS -->
<div class="a" style="left:840px;top:82px;width:11px;height:535px;background:#474747"></div>
<div class="a" style="left:851px;top:62px;width:2px;height:555px;background:#3a3a3a"></div>
<!-- STATUS BAR -->
<div class="a" style="left:50px;top:604.3px;width:790px;height:11.5px;background:#474747"></div>
<div class="a" style="left:53.5px;top:604px;width:32px;height:11.5px;background:#3e3e3e"></div>
<div class="t" style="left:55px;top:608px;font-size:7px;color:#e4e4e4">60%</div>
<div class="a" style="left:85.5px;top:604px;width:10.5px;height:11.5px;background:#3a3a3a"></div>
<svg style="left:88px;top:608px" width="6" height="4" viewBox="0 0 6 4"><path d="M0.5 0.5l2.5 2.5 2.5-2.5" stroke="#c8c8c8" stroke-width="0.9" fill="none"/></svg>
<svg style="left:104.5px;top:606px" width="7" height="7" viewBox="0 0 7 7"><path d="M0.8 0.5v6" stroke="#d0d0d0" stroke-width="1.2"/><path d="M6.5 0.5L2 3.5 6.5 6.5z" fill="#d0d0d0"/></svg>
<svg style="left:118px;top:606px" width="5" height="7" viewBox="0 0 5 7"><path d="M4.5 0.5L0.5 3.5 4.5 6.5z" fill="#d0d0d0"/></svg>
<div class="a" style="left:129px;top:604px;width:27px;height:11.5px;background:#3e3e3e"></div>
<div class="t" style="left:131px;top:608px;font-size:7px;color:#e4e4e4">2</div>
<div class="a" style="left:156px;top:604px;width:12px;height:11.5px;background:#3a3a3a"></div>
<svg style="left:159px;top:608px" width="6" height="4" viewBox="0 0 6 4"><path d="M0.5 0.5l2.5 2.5 2.5-2.5" stroke="#c8c8c8" stroke-width="0.9" fill="none"/></svg>
<svg style="left:173px;top:606px" width="5" height="7" viewBox="0 0 5 7"><path d="M0.5 0.5L4.5 3.5 0.5 6.5z" fill="#5e5e5e"/></svg>
<svg style="left:183px;top:606px" width="7" height="7" viewBox="0 0 7 7"><path d="M6.2 0.5v6" stroke="#5e5e5e" stroke-width="1.2"/><path d="M0.5 0.5L5 3.5 0.5 6.5z" fill="#5e5e5e"/></svg>
<div class="a" style="left:196px;top:604px;width:1px;height:11px;background:#3e3e3e"></div>
<div class="t" style="left:250.5px;top:608px;font-size:7.3px;color:#d8d8d8">Selection</div>
<svg style="left:340px;top:607px" width="5" height="6" viewBox="0 0 5 6"><path d="M0.5 0.5L4.5 3 0.5 5.5z" fill="#d8d8d8"/></svg>
<div class="a" style="left:347px;top:604.5px;width:493px;height:11px;background:#424242"></div>
<svg style="left:352px;top:607px" width="4" height="6" viewBox="0 0 4 6"><path d="M3.3 0.5L1 3 3.3 5.5" stroke="#8a8a8a" stroke-width="0.8" fill="none"/></svg>
<div class="a" style="left:580px;top:605.5px;width:19px;height:9px;border-radius:4.5px;background:#5a5a5a"></div>
<svg style="left:832px;top:607px" width="4" height="6" viewBox="0 0 4 6"><path d="M0.7 0.5L3 3 0.7 5.5" stroke="#8a8a8a" stroke-width="0.8" fill="none"/></svg>
<div class="a" style="left:840px;top:603px;width:11px;height:12.5px;background:#474747"></div>
<!-- vertical scrollbar -->
<div class="a" style="left:840px;top:82px;width:11px;height:522.3px;background:#434343;border-left:1px solid #3e3e3e"></div>
<svg style="left:842.5px;top:86px" width="6" height="4" viewBox="0 0 6 4"><path d="M0.5 3.5l2.5-2.5 2.5 2.5" stroke="#8a8a8a" stroke-width="0.8" fill="none"/></svg>
<svg style="left:842.5px;top:596px" width="6" height="4" viewBox="0 0 6 4"><path d="M0.5 0.5l2.5 2.5 2.5-2.5" stroke="#8a8a8a" stroke-width="0.8" fill="none"/></svg>
<div class="a" style="left:841px;top:333.5px;width:9px;height:17.5px;border-radius:4.5px;background:#5a5a5a"></div>

<svg style="left:768px;top:302px" width="12" height="15" viewBox="0 0 12 15"><path d="M1.6 1.5L10.5 9.6 6.3 9.8 1.6 13.7z" fill="#0a0a0a" stroke="#c8c8c8" stroke-width="0.9" stroke-linejoin="round"/></svg>
<svg style="left:0;top:0" width="1100" height="617" viewBox="0 0 1100 617"><g font-family="Liberation Sans" font-weight="bold"><text x="365" y="374.8" textLength="27.7" lengthAdjust="spacingAndGlyphs" fill="#2f9d9f" font-size="3.2">hello@yourwebsite.com</text><text x="365" y="380.9" textLength="11" lengthAdjust="spacingAndGlyphs" fill="#2f9d9f" font-size="3.2">555 555</text><text x="365" y="386.9" textLength="28" lengthAdjust="spacingAndGlyphs" fill="#2f9d9f" font-size="3.2">123 street New York</text><text x="620" y="501.1" textLength="26.6" lengthAdjust="spacingAndGlyphs" fill="#2f9d9f" font-size="3.2">hello@yourwebsite.com</text><text x="620" y="506.7" textLength="10" lengthAdjust="spacingAndGlyphs" fill="#2f9d9f" font-size="3.2">555 555</text><text x="620" y="512.3" textLength="26" lengthAdjust="spacingAndGlyphs" fill="#2f9d9f" font-size="3.2">123 Street, New York</text><text x="487" y="522.8" textLength="15.5" lengthAdjust="spacingAndGlyphs" fill="#e6f6f6" font-size="2.6">hello@yourwebsite.com</text><text x="487" y="527.1" textLength="7" lengthAdjust="spacingAndGlyphs" fill="#e6f6f6" font-size="2.6">555 555</text><text x="487" y="531.4" textLength="15.5" lengthAdjust="spacingAndGlyphs" fill="#e6f6f6" font-size="2.6">123 Street, New York</text><text x="594.5" y="349" textLength="19" lengthAdjust="spacingAndGlyphs" fill="#3aa3a6" font-size="2.6">hello@yourweb.com</text><text x="629.5" y="349" textLength="20" lengthAdjust="spacingAndGlyphs" fill="#3aa3a6" font-size="2.6">123 Street New York</text><text x="675" y="349" textLength="10" lengthAdjust="spacingAndGlyphs" fill="#3aa3a6" font-size="2.6">555 555</text></g></svg>
<!-- DOCK -->
<div class="a" style="left:853px;top:62px;width:247px;height:9px;background:#3b3b3b"></div>
<svg style="left:870px;top:64.5px" width="6" height="4" viewBox="0 0 6 4"><path d="M2.5 0.3L0.7 2 2.5 3.7M5.3 0.3L3.5 2 5.3 3.7" stroke="#8a8a8a" stroke-width="0.6" fill="none"/></svg>
<svg style="left:896.5px;top:64.5px" width="6" height="4" viewBox="0 0 6 4"><path d="M2.5 0.3L0.7 2 2.5 3.7M5.3 0.3L3.5 2 5.3 3.7" stroke="#8a8a8a" stroke-width="0.6" fill="none"/></svg>
<svg style="left:1090px;top:64.5px" width="6" height="4" viewBox="0 0 6 4"><path d="M0.7 0.3L2.5 2 0.7 3.7M3.5 0.3L5.3 2 3.5 3.7" stroke="#8a8a8a" stroke-width="0.6" fill="none"/></svg>
<div class="a" style="left:853px;top:71px;width:25px;height:546px;background:#474747"></div>
<div class="a" style="left:878px;top:71px;width:28px;height:546px;background:#474747;border-left:1px solid #3c3c3c"></div>
<div class="a" style="left:906px;top:71px;width:2px;height:546px;background:#3c3c3c"></div>
<div class="a" style="left:853px;top:71px;width:25px;height:462.5px;background:#4b4b4b;border-right:1px solid #3e3e3e"></div>
<div class="a" style="left:879px;top:71px;width:26px;height:56px;background:#4b4b4b"></div>
<div class="a" style="left:853px;top:99px;width:52px;height:1px;background:#3c3c3c"></div>
<div class="a" style="left:853px;top:127px;width:52px;height:1px;background:#3c3c3c"></div>
<div class="a" style="left:853px;top:155px;width:25px;height:1px;background:#3c3c3c"></div>
<div class="a" style="left:853px;top:222px;width:25px;height:1px;background:#3c3c3c"></div>
<div class="a" style="left:853px;top:250px;width:25px;height:1px;background:#3c3c3c"></div>
<div class="a" style="left:853px;top:316px;width:25px;height:1px;background:#3c3c3c"></div>
<div class="a" style="left:853px;top:344.5px;width:25px;height:1px;background:#3c3c3c"></div>
<div class="a" style="left:853px;top:411px;width:25px;height:1px;background:#3c3c3c"></div>
<div class="a" style="left:853px;top:458px;width:25px;height:1px;background:#3c3c3c"></div>
<div class="a" style="left:853px;top:506px;width:25px;height:1px;background:#3c3c3c"></div>
<div class="a" style="left:860px;top:73px;width:12px;height:1.3px;background:#3e3e3e"></div><div class="a" style="left:887px;top:73px;width:12px;height:1.3px;background:#3e3e3e"></div><div class="a" style="left:860px;top:101px;width:12px;height:1.3px;background:#3e3e3e"></div><div class="a" style="left:887px;top:101px;width:12px;height:1.3px;background:#3e3e3e"></div><div class="a" style="left:860px;top:129px;width:12px;height:1.3px;background:#3e3e3e"></div><div class="a" style="left:860px;top:157px;width:12px;height:1.3px;background:#3e3e3e"></div><div class="a" style="left:860px;top:224px;width:12px;height:1.3px;background:#3e3e3e"></div><div class="a" style="left:860px;top:252px;width:12px;height:1.3px;background:#3e3e3e"></div><div class="a" style="left:860px;top:318px;width:12px;height:1.3px;background:#3e3e3e"></div><div class="a" style="left:860px;top:346.5px;width:12px;height:1.3px;background:#3e3e3e"></div><div class="a" style="left:860px;top:413px;width:12px;height:1.3px;background:#3e3e3e"></div><div class="a" style="left:860px;top:460px;width:12px;height:1.3px;background:#3e3e3e"></div><div class="a" style="left:860px;top:508px;width:12px;height:1.3px;background:#3e3e3e"></div>
<svg style="left:858.5px;top:81px" width="15" height="11" viewBox="0 0 15 11"><path d="M4.5 10H3.5A2.8 2.8 0 0 1 3.2 4.4A4.3 4.3 0 0 1 11.5 3.8A3.1 3.1 0 0 1 11.5 10H6.2A2.4 2.4 0 0 1 6.2 5.2A2.6 2.6 0 0 1 9.4 7.2L9.8 10" fill="none" stroke="#cfcfcf" stroke-width="1.3"/></svg>
<div class="t" style="left:884px;top:80.5px;font-size:13px;color:#cfcfcf">A</div>
<div class="a" style="left:895px;top:81px;width:1px;height:12px;background:#cfcfcf"></div>
<svg style="left:858.5px;top:108.5px" width="14" height="13" viewBox="0 0 14 13"><circle cx="5.3" cy="5.3" r="4.5" fill="#e0e0e0"/><circle cx="8.5" cy="7.8" r="4.3" fill="#8a8a8a" stroke="#d0d0d0" stroke-width="0.9"/></svg>
<div class="t" style="left:886.5px;top:108.5px;font-size:12px;font-weight:bold;color:#cfcfcf">&#182;</div>
<svg style="left:859.5px;top:137px" width="13" height="11" viewBox="0 0 13 11"><defs><linearGradient id="dg1"><stop offset="0" stop-color="#ececec"/><stop offset="1" stop-color="#5a5a5a"/></linearGradient></defs><rect x="0.5" y="0.5" width="12" height="10" fill="url(#dg1)" stroke="#cfcfcf" stroke-width="0.9"/></svg>
<svg style="left:858.5px;top:164px" width="14" height="13" viewBox="0 0 14 13"><path d="M7 1C3 1 0.5 3.5 0.5 6.5S3 12 6 12c1.5 0 1.5-1.5 1-2.5s0-1.8 1.2-1.8H10c2.2 0 3.5-1 3.5-3C13.5 2.5 10.5 1 7 1z" fill="#cfcfcf"/><circle cx="4" cy="5" r="1.1" fill="#4b4b4b"/><circle cx="7" cy="3.5" r="1.1" fill="#4b4b4b"/><circle cx="10.3" cy="4.5" r="1.1" fill="#4b4b4b"/><circle cx="3.5" cy="8.5" r="1.1" fill="#4b4b4b"/></svg>
<svg style="left:859.5px;top:184.5px" width="12" height="13" viewBox="0 0 12 13"><path d="M0.8 0.5V12.5H11.5A11 11 0 0 0 0.8 0.5z" fill="#cfcfcf"/><path d="M0.8 12.5L11.5 12.5A11 11 0 0 0 8 4.5z" fill="#8a8a8a"/></svg>
<svg style="left:858.5px;top:204px" width="14" height="14" viewBox="0 0 14 14"><circle cx="5.5" cy="7.5" r="4.3" stroke="#cfcfcf" stroke-width="1.2" fill="none"/><path d="M3 10L12 1.5M5.5 7.5L11.5 12.5" stroke="#cfcfcf" stroke-width="1.1"/><circle cx="11.8" cy="1.8" r="1.5" fill="#cfcfcf"/><circle cx="11.8" cy="12.3" r="1.5" fill="#cfcfcf"/><circle cx="5.5" cy="7.5" r="1.3" fill="#cfcfcf"/></svg>
<svg style="left:859px;top:232px" width="13" height="11" viewBox="0 0 13 11"><rect x="0.5" y="0.5" width="12" height="10" fill="none" stroke="#cfcfcf" stroke-width="0.9"/><rect x="2" y="2" width="4" height="3" fill="#cfcfcf"/><rect x="7" y="2" width="4" height="3" fill="#cfcfcf"/><rect x="2" y="6" width="4" height="3" fill="#cfcfcf"/><rect x="7" y="6" width="4" height="3" fill="#cfcfcf"/></svg>
<svg style="left:859.5px;top:259px" width="12" height="14" viewBox="0 0 12 14"><path d="M2 13h8V8.5L11.5 3 8.5 5.5 7.5 1 6 5 3.8 1.5 3.5 5.5 0.5 3 2 8.5z" fill="#cfcfcf"/><path d="M2 9.5h8" stroke="#4b4b4b" stroke-width="0.8"/></svg>
<svg style="left:859.5px;top:279.5px" width="12" height="13" viewBox="0 0 12 13"><circle cx="6" cy="3.2" r="2.8" fill="#cfcfcf"/><circle cx="2.9" cy="7.3" r="2.8" fill="#cfcfcf"/><circle cx="9.1" cy="7.3" r="2.8" fill="#cfcfcf"/><path d="M6 6.5L4 12.5H8z" fill="#cfcfcf"/></svg>
<svg style="left:859px;top:298.5px" width="13" height="13" viewBox="0 0 13 13"><rect x="4.5" y="0.5" width="8" height="8" fill="none" stroke="#cfcfcf" stroke-width="1"/><path d="M0.5 6.5h5v6h-5z" fill="#4b4b4b" stroke="#cfcfcf" stroke-width="0.9"/><path d="M2 10l2-3 1.5 1.5" stroke="#cfcfcf" stroke-width="0.8" fill="none"/></svg>
<svg style="left:859px;top:327px" width="13" height="11" viewBox="0 0 13 11"><path d="M0 1.2h13M0 5.5h13M0 9.8h13" stroke="#cfcfcf" stroke-width="1.7"/></svg>
<svg style="left:859px;top:355px" width="13" height="13" viewBox="0 0 13 13"><rect x="2" y="2" width="9" height="9" fill="none" stroke="#cfcfcf" stroke-width="0.8" stroke-dasharray="1.3 1"/><rect x="0.5" y="0.5" width="2.5" height="2.5" fill="#cfcfcf"/><rect x="10" y="0.5" width="2.5" height="2.5" fill="#cfcfcf"/><rect x="0.5" y="10" width="2.5" height="2.5" fill="#cfcfcf"/><rect x="10" y="10" width="2.5" height="2.5" fill="#cfcfcf"/></svg>
<svg style="left:859.5px;top:374.5px" width="12" height="13" viewBox="0 0 12 13"><path d="M1 0v13" stroke="#cfcfcf" stroke-width="1.3"/><rect x="2.5" y="2.5" width="6" height="3" fill="#cfcfcf"/><rect x="2.5" y="7.5" width="9" height="3" fill="#cfcfcf"/></svg>
<svg style="left:859.5px;top:393.5px" width="12" height="13" viewBox="0 0 12 13"><rect x="0.5" y="0.5" width="7" height="7" fill="#cfcfcf"/><rect x="4" y="5" width="7.5" height="7.5" fill="#8a8a8a" stroke="#cfcfcf" stroke-width="0.9"/></svg>
<svg style="left:859px;top:418px" width="13" height="13" viewBox="0 0 13 13"><path d="M5.5 1.5H0.8v10.8h10.8V7.5" stroke="#cfcfcf" stroke-width="1.2" fill="none"/><path d="M5 8.5L12 1.5M7.5 1h5v5" stroke="#cfcfcf" stroke-width="1.2" fill="none"/></svg>
<svg style="left:859px;top:440.5px" width="13" height="13" viewBox="0 0 13 13"><rect x="0.8" y="0.8" width="7.5" height="7.5" fill="none" stroke="#cfcfcf" stroke-width="1.1"/><rect x="4.5" y="4.5" width="7.8" height="7.8" fill="#4b4b4b" stroke="#cfcfcf" stroke-width="1.1"/></svg>
<svg style="left:861px;top:470px" width="10" height="12" viewBox="0 0 10 12"><path d="M0.5 0.5L9.5 6 0.5 11.5z" fill="#cfcfcf"/></svg>
<svg style="left:859.5px;top:490px" width="12" height="8" viewBox="0 0 12 8"><rect x="0.7" y="1" width="6.5" height="5.5" rx="2.7" fill="none" stroke="#cfcfcf" stroke-width="1.2"/><rect x="4.8" y="1" width="6.5" height="5.5" rx="2.7" fill="none" stroke="#cfcfcf" stroke-width="1.2"/></svg>
<div class="t" style="left:861px;top:516px;font-size:12px;font-style:italic;font-family:'Liberation Serif',serif;color:#cfcfcf">O</div>
<!-- LAYERS -->
<div class="a" style="left:908px;top:71px;width:192px;height:18px;background:#3b3b3b"></div>
<div class="a" style="left:908px;top:70.5px;width:34px;height:18.5px;background:#4b4b4b"></div>
<div class="t" style="left:914.5px;top:76.5px;font-size:7.3px;font-weight:bold;color:#ededed">Layers</div>
<svg style="left:1088px;top:76px" width="8" height="7" viewBox="0 0 8 7"><rect width="8" height="7" fill="#6a6a6a"/><path d="M0 2.3h8M0 4.6h8M2.7 0v7M5.3 0v7" stroke="#3b3b3b" stroke-width="0.5"/></svg>
<div class="a" style="left:908px;top:89px;width:192px;height:306.5px;background:#4b4b4b"></div>
<div class="a" style="left:911.5px;top:89px;width:0.6px;height:293px;background:#4a4a4a"></div>
<div class="a" style="left:1096px;top:89px;width:0.6px;height:293px;background:#4a4a4a"></div>
<div class="a" style="left:912px;top:107.75px;width:184px;height:0.5px;background:#424242"></div>
<svg style="left:913.7px;top:97.5px" width="10" height="7" viewBox="0 0 10 7"><path d="M0.5 3.5Q5 -1.5 9.5 3.5Q5 8.5 0.5 3.5z" fill="#d0d0d0"/><circle cx="5" cy="3.5" r="1.6" fill="#4b4b4b"/><circle cx="5" cy="3.5" r="0.8" fill="#d0d0d0"/></svg>
<div class="a" style="left:941.2px;top:94.75px;width:2.8px;height:13px;background:#d2573f"></div>
<svg style="left:949.5px;top:99.0px" width="6" height="4" viewBox="0 0 6 4"><path d="M0.5 0.5l2.5 2.5 2.5-2.5" stroke="#d0d0d0" stroke-width="0.9" fill="none"/></svg>
<svg style="left:962px;top:95.0px" width="12" height="12" viewBox="0 0 12 12"><rect x="0.5" y="0.5" width="11" height="11" fill="#fff"/><rect x="2" y="6" width="3" height="4" fill="#55b4b6"/><rect x="6" y="4" width="4" height="6" fill="#55b4b6"/><rect x="4" y="7.5" width="3" height="2.5" fill="#7cc6c8"/><rect x="0.25" y="0.25" width="11.5" height="11.5" fill="none" stroke="#2e2e2e" stroke-width="0.6"/></svg>
<div class="t" style="left:977.2px;top:98.10px;font-size:6.6px;color:#d8d8d8">STATIONARY</div>
<div class="a" style="left:1071px;top:93.75px;width:0.6px;height:14.5px;background:#474747"></div>
<svg style="left:1075px;top:97.5px" width="7" height="7" viewBox="0 0 7 7"><circle cx="3.5" cy="3.5" r="2.7" fill="none" stroke="#c8c8c8" stroke-width="0.9"/></svg>
<div class="a" style="left:912px;top:108.25px;width:184px;height:14.5px;background:#4a5c78"></div>
<svg style="left:1091px;top:108.25px" width="5" height="5" viewBox="0 0 5 5"><path d="M0 0h5v5z" fill="#dfe6f0"/></svg>
<div class="a" style="left:912px;top:122.25px;width:184px;height:0.5px;background:#424242"></div>
<svg style="left:913.7px;top:112.0px" width="10" height="7" viewBox="0 0 10 7"><path d="M0.5 3.5Q5 -1.5 9.5 3.5Q5 8.5 0.5 3.5z" fill="#d0d0d0"/><circle cx="5" cy="3.5" r="1.6" fill="#4b4b4b"/><circle cx="5" cy="3.5" r="0.8" fill="#d0d0d0"/></svg>
<div class="a" style="left:941.2px;top:109.25px;width:2.8px;height:13px;background:#6bc24b"></div>
<svg style="left:965px;top:112.5px" width="4" height="6" viewBox="0 0 4 6"><path d="M0.5 0.5l2.5 2.5-2.5 2.5" stroke="#d0d0d0" stroke-width="0.9" fill="none"/></svg>
<svg style="left:977.5px;top:109.5px" width="12" height="12" viewBox="0 0 12 12"><rect x="0.5" y="0.5" width="11" height="11" fill="#f0f0f0"/><path d="M6 1.5L10.3 4V8.5L6 11 1.7 8.5V4z" fill="#55b4b6"/><path d="M6 3L9 4.8V8L6 9.7 3 8V4.8z" fill="#fff"/><rect x="2.5" y="5.5" width="7" height="2.5" fill="#e86a50"/><rect x="0.25" y="0.25" width="11.5" height="11.5" fill="none" stroke="#2e2e2e" stroke-width="0.6"/></svg>
<div class="t" style="left:993.6px;top:113.00px;font-size:7.13px;color:#e8e8e8">New Symbol</div>
<div class="a" style="left:1071px;top:108.25px;width:0.6px;height:14.5px;background:#474747"></div>
<svg style="left:1075px;top:112.0px" width="7" height="7" viewBox="0 0 7 7"><circle cx="3.5" cy="3.5" r="2.7" fill="none" stroke="#c8c8c8" stroke-width="0.9"/></svg>
<div class="a" style="left:912px;top:136.75px;width:184px;height:0.5px;background:#424242"></div>
<svg style="left:913.7px;top:126.5px" width="10" height="7" viewBox="0 0 10 7"><path d="M0.5 3.5Q5 -1.5 9.5 3.5Q5 8.5 0.5 3.5z" fill="#d0d0d0"/><circle cx="5" cy="3.5" r="1.6" fill="#4b4b4b"/><circle cx="5" cy="3.5" r="0.8" fill="#d0d0d0"/></svg>
<div class="a" style="left:941.2px;top:123.75px;width:2.8px;height:13px;background:#6bc24b"></div>
<svg style="left:965px;top:127.0px" width="4" height="6" viewBox="0 0 4 6"><path d="M0.5 0.5l2.5 2.5-2.5 2.5" stroke="#d0d0d0" stroke-width="0.9" fill="none"/></svg>
<svg style="left:977.5px;top:124.0px" width="12" height="12" viewBox="0 0 12 12"><rect x="0.5" y="0.5" width="11" height="11" fill="#fff"/><rect x="1" y="1.5" width="10" height="4" fill="#55b4b6"/><rect x="1" y="6.5" width="4" height="4" fill="#55b4b6"/><rect x="6" y="6.5" width="5" height="4" fill="#8fd0d1"/><rect x="0.25" y="0.25" width="11.5" height="11.5" fill="none" stroke="#2e2e2e" stroke-width="0.6"/></svg>
<div class="t" style="left:993.6px;top:126.60px;font-size:7.6px;color:#d8d8d8">&lt;Group&gt;</div>
<div class="a" style="left:1071px;top:122.75px;width:0.6px;height:14.5px;background:#474747"></div>
<svg style="left:1075px;top:126.5px" width="7" height="7" viewBox="0 0 7 7"><circle cx="3.5" cy="3.5" r="2.7" fill="none" stroke="#c8c8c8" stroke-width="0.9"/></svg>
<div class="a" style="left:912px;top:151.25px;width:184px;height:0.5px;background:#424242"></div>
<svg style="left:913.7px;top:141.0px" width="10" height="7" viewBox="0 0 10 7"><path d="M0.5 3.5Q5 -1.5 9.5 3.5Q5 8.5 0.5 3.5z" fill="#d0d0d0"/><circle cx="5" cy="3.5" r="1.6" fill="#4b4b4b"/><circle cx="5" cy="3.5" r="0.8" fill="#d0d0d0"/></svg>
<div class="a" style="left:941.2px;top:138.25px;width:2.8px;height:13px;background:#6bc24b"></div>
<svg style="left:965px;top:141.5px" width="4" height="6" viewBox="0 0 4 6"><path d="M0.5 0.5l2.5 2.5-2.5 2.5" stroke="#d0d0d0" stroke-width="0.9" fill="none"/></svg>
<svg style="left:977.5px;top:138.5px" width="12" height="12" viewBox="0 0 12 12"><rect x="0.5" y="0.5" width="11" height="11" fill="#fff"/><rect x="4" y="6" width="4.5" height="5" fill="#55b4b6"/><rect x="0.25" y="0.25" width="11.5" height="11.5" fill="none" stroke="#2e2e2e" stroke-width="0.6"/></svg>
<div class="t" style="left:993.6px;top:141.10px;font-size:7.6px;color:#d8d8d8">&lt;Group&gt;</div>
<div class="a" style="left:1071px;top:137.25px;width:0.6px;height:14.5px;background:#474747"></div>
<svg style="left:1075px;top:141.0px" width="7" height="7" viewBox="0 0 7 7"><circle cx="3.5" cy="3.5" r="2.8" fill="#9a9a9a" stroke="#c8c8c8" stroke-width="0.9"/></svg>
<div class="a" style="left:912px;top:165.75px;width:184px;height:0.5px;background:#424242"></div>
<svg style="left:913.7px;top:155.5px" width="10" height="7" viewBox="0 0 10 7"><path d="M0.5 3.5Q5 -1.5 9.5 3.5Q5 8.5 0.5 3.5z" fill="#d0d0d0"/><circle cx="5" cy="3.5" r="1.6" fill="#4b4b4b"/><circle cx="5" cy="3.5" r="0.8" fill="#d0d0d0"/></svg>
<div class="a" style="left:941.2px;top:152.75px;width:2.8px;height:13px;background:#6bc24b"></div>
<svg style="left:965px;top:156.0px" width="4" height="6" viewBox="0 0 4 6"><path d="M0.5 0.5l2.5 2.5-2.5 2.5" stroke="#d0d0d0" stroke-width="0.9" fill="none"/></svg>
<svg style="left:977.5px;top:153.0px" width="12" height="12" viewBox="0 0 12 12"><rect x="0.5" y="0.5" width="11" height="11" fill="#fff"/><rect x="1" y="2" width="10" height="5.5" fill="#55b4b6"/><rect x="1" y="3" width="10" height="1" fill="#dff"/><rect x="0.25" y="0.25" width="11.5" height="11.5" fill="none" stroke="#2e2e2e" stroke-width="0.6"/></svg>
<div class="t" style="left:993.6px;top:155.60px;font-size:7.6px;color:#d8d8d8">&lt;Group&gt;</div>
<div class="a" style="left:1071px;top:151.75px;width:0.6px;height:14.5px;background:#474747"></div>
<svg style="left:1075px;top:155.5px" width="7" height="7" viewBox="0 0 7 7"><circle cx="3.5" cy="3.5" r="2.7" fill="none" stroke="#c8c8c8" stroke-width="0.9"/></svg>
<div class="a" style="left:912px;top:180.25px;width:184px;height:0.5px;background:#424242"></div>
<svg style="left:913.7px;top:170.0px" width="10" height="7" viewBox="0 0 10 7"><path d="M0.5 3.5Q5 -1.5 9.5 3.5Q5 8.5 0.5 3.5z" fill="#d0d0d0"/><circle cx="5" cy="3.5" r="1.6" fill="#4b4b4b"/><circle cx="5" cy="3.5" r="0.8" fill="#d0d0d0"/></svg>
<div class="a" style="left:941.2px;top:167.25px;width:2.8px;height:13px;background:#6bc24b"></div>
<svg style="left:965px;top:170.5px" width="4" height="6" viewBox="0 0 4 6"><path d="M0.5 0.5l2.5 2.5-2.5 2.5" stroke="#d0d0d0" stroke-width="0.9" fill="none"/></svg>
<svg style="left:977.5px;top:167.5px" width="12" height="12" viewBox="0 0 12 12"><rect x="0.5" y="0.5" width="11" height="11" fill="#fff"/><rect x="1" y="7" width="10" height="0.8" fill="#e8e8e8"/><rect x="0.25" y="0.25" width="11.5" height="11.5" fill="none" stroke="#2e2e2e" stroke-width="0.6"/></svg>
<div class="t" style="left:993.6px;top:170.10px;font-size:7.6px;color:#d8d8d8">&lt;Group&gt;</div>
<div class="a" style="left:1071px;top:166.25px;width:0.6px;height:14.5px;background:#474747"></div>
<svg style="left:1075px;top:170.0px" width="7" height="7" viewBox="0 0 7 7"><circle cx="3.5" cy="3.5" r="2.7" fill="none" stroke="#c8c8c8" stroke-width="0.9"/></svg>
<div class="a" style="left:912px;top:194.75px;width:184px;height:0.5px;background:#424242"></div>
<svg style="left:913.7px;top:184.5px" width="10" height="7" viewBox="0 0 10 7"><path d="M0.5 3.5Q5 -1.5 9.5 3.5Q5 8.5 0.5 3.5z" fill="#d0d0d0"/><circle cx="5" cy="3.5" r="1.6" fill="#4b4b4b"/><circle cx="5" cy="3.5" r="0.8" fill="#d0d0d0"/></svg>
<div class="a" style="left:941.2px;top:181.75px;width:2.8px;height:13px;background:#6bc24b"></div>
<svg style="left:965px;top:185.0px" width="4" height="6" viewBox="0 0 4 6"><path d="M0.5 0.5l2.5 2.5-2.5 2.5" stroke="#d0d0d0" stroke-width="0.9" fill="none"/></svg>
<svg style="left:977.5px;top:182.0px" width="12" height="12" viewBox="0 0 12 12"><rect x="0.5" y="0.5" width="11" height="11" fill="#fff"/><rect x="7" y="2" width="2" height="8" fill="#55b4b6"/><rect x="3" y="8" width="6" height="2" fill="#8fd0d1"/><rect x="0.25" y="0.25" width="11.5" height="11.5" fill="none" stroke="#2e2e2e" stroke-width="0.6"/></svg>
<div class="t" style="left:993.6px;top:184.60px;font-size:7.6px;color:#d8d8d8">&lt;Group&gt;</div>
<div class="a" style="left:1071px;top:180.75px;width:0.6px;height:14.5px;background:#474747"></div>
<svg style="left:1075px;top:184.5px" width="7" height="7" viewBox="0 0 7 7"><circle cx="3.5" cy="3.5" r="2.7" fill="none" stroke="#c8c8c8" stroke-width="0.9"/></svg>
<div class="a" style="left:912px;top:209.25px;width:184px;height:0.5px;background:#424242"></div>
<svg style="left:913.7px;top:199.0px" width="10" height="7" viewBox="0 0 10 7"><path d="M0.5 3.5Q5 -1.5 9.5 3.5Q5 8.5 0.5 3.5z" fill="#d0d0d0"/><circle cx="5" cy="3.5" r="1.6" fill="#4b4b4b"/><circle cx="5" cy="3.5" r="0.8" fill="#d0d0d0"/></svg>
<div class="a" style="left:941.2px;top:196.25px;width:2.8px;height:13px;background:#6bc24b"></div>
<svg style="left:965px;top:199.5px" width="4" height="6" viewBox="0 0 4 6"><path d="M0.5 0.5l2.5 2.5-2.5 2.5" stroke="#d0d0d0" stroke-width="0.9" fill="none"/></svg>
<svg style="left:977.5px;top:196.5px" width="12" height="12" viewBox="0 0 12 12"><rect x="0.5" y="0.5" width="11" height="11" fill="#fff"/><rect x="1" y="3" width="10" height="5" fill="#55b4b6"/><rect x="2" y="4" width="8" height="1" fill="#dff"/><rect x="0.25" y="0.25" width="11.5" height="11.5" fill="none" stroke="#2e2e2e" stroke-width="0.6"/></svg>
<div class="t" style="left:993.6px;top:199.10px;font-size:7.6px;color:#d8d8d8">&lt;Group&gt;</div>
<div class="a" style="left:1071px;top:195.25px;width:0.6px;height:14.5px;background:#474747"></div>
<svg style="left:1075px;top:199.0px" width="7" height="7" viewBox="0 0 7 7"><circle cx="3.5" cy="3.5" r="2.8" fill="#9a9a9a" stroke="#c8c8c8" stroke-width="0.9"/></svg>
<div class="a" style="left:912px;top:223.75px;width:184px;height:0.5px;background:#424242"></div>
<svg style="left:913.7px;top:213.5px" width="10" height="7" viewBox="0 0 10 7"><path d="M0.5 3.5Q5 -1.5 9.5 3.5Q5 8.5 0.5 3.5z" fill="#d0d0d0"/><circle cx="5" cy="3.5" r="1.6" fill="#4b4b4b"/><circle cx="5" cy="3.5" r="0.8" fill="#d0d0d0"/></svg>
<div class="a" style="left:941.2px;top:210.75px;width:2.8px;height:13px;background:#6bc24b"></div>
<svg style="left:965px;top:214.0px" width="4" height="6" viewBox="0 0 4 6"><path d="M0.5 0.5l2.5 2.5-2.5 2.5" stroke="#d0d0d0" stroke-width="0.9" fill="none"/></svg>
<svg style="left:977.5px;top:211.0px" width="12" height="12" viewBox="0 0 12 12"><rect x="0.5" y="0.5" width="11" height="11" fill="#fff"/><rect x="0.25" y="0.25" width="11.5" height="11.5" fill="none" stroke="#2e2e2e" stroke-width="0.6"/></svg>
<div class="t" style="left:993.6px;top:213.60px;font-size:7.6px;color:#d8d8d8">&lt;Group&gt;</div>
<div class="a" style="left:1071px;top:209.75px;width:0.6px;height:14.5px;background:#474747"></div>
<svg style="left:1075px;top:213.5px" width="7" height="7" viewBox="0 0 7 7"><circle cx="3.5" cy="3.5" r="2.8" fill="#9a9a9a" stroke="#c8c8c8" stroke-width="0.9"/></svg>
<div class="a" style="left:912px;top:238.25px;width:184px;height:0.5px;background:#424242"></div>
<svg style="left:913.7px;top:228.0px" width="10" height="7" viewBox="0 0 10 7"><path d="M0.5 3.5Q5 -1.5 9.5 3.5Q5 8.5 0.5 3.5z" fill="#d0d0d0"/><circle cx="5" cy="3.5" r="1.6" fill="#4b4b4b"/><circle cx="5" cy="3.5" r="0.8" fill="#d0d0d0"/></svg>
<div class="a" style="left:941.2px;top:225.25px;width:2.8px;height:13px;background:#d2573f"></div>
<svg style="left:929.5px;top:227.5px" width="7" height="8" viewBox="0 0 7 8"><path d="M1.8 3.5V2.3a1.7 1.7 0 0 1 3.4 0V3.5" stroke="#d0d0d0" stroke-width="0.9" fill="none"/><rect x="0.8" y="3.5" width="5.4" height="4" fill="#d0d0d0"/></svg>
<svg style="left:950.5px;top:228.5px" width="4" height="6" viewBox="0 0 4 6"><path d="M0.5 0.5l2.5 2.5-2.5 2.5" stroke="#d0d0d0" stroke-width="0.9" fill="none"/></svg>
<svg style="left:962px;top:225.5px" width="12" height="12" viewBox="0 0 12 12"><rect x="0.5" y="0.5" width="11" height="11" fill="#7a7a7a" stroke="#3a3a3a" stroke-width="0.8"/><rect x="0.25" y="0.25" width="11.5" height="11.5" fill="none" stroke="#2e2e2e" stroke-width="0.6"/></svg>
<div class="t" style="left:977.2px;top:228.60px;font-size:6.6px;color:#d8d8d8">BACKGROUND</div>
<div class="a" style="left:1071px;top:224.25px;width:0.6px;height:14.5px;background:#474747"></div>
<svg style="left:1075px;top:228.0px" width="7" height="7" viewBox="0 0 7 7"><circle cx="3.5" cy="3.5" r="2.7" fill="none" stroke="#c8c8c8" stroke-width="0.9"/></svg>
<div class="a" style="left:927px;top:93.75px;width:0.6px;height:145px;background:#494949"></div>
<div class="a" style="left:912px;top:382px;width:184px;height:0.8px;background:#4a4a4a"></div>
<div class="t" style="left:912px;top:385.5px;font-size:7.04px;color:#d0d0d0">2 Layers</div>
<svg style="left:1001.5px;top:383.5px" width="9" height="9" viewBox="0 0 9 9"><circle cx="5.3" cy="3.7" r="3" stroke="#6a6a6a" stroke-width="0.9" fill="none"/><path d="M3.2 5.8L0.5 8.5" stroke="#6a6a6a" stroke-width="1"/></svg>
<svg style="left:1018.5px;top:384px" width="9" height="9" viewBox="0 0 9 9"><rect x="0.5" y="0.5" width="6.5" height="6.5" fill="none" stroke="#cfcfcf" stroke-width="0.9"/><rect x="2" y="2" width="4" height="4" fill="#cfcfcf"/><path d="M7.5 3v5.5H3" stroke="#9a9a9a" stroke-width="0.8" fill="none"/></svg>
<svg style="left:1035.5px;top:384.5px" width="11" height="8" viewBox="0 0 11 8"><path d="M0.5 4h3M2 1.5v3" stroke="#d8d8d8" stroke-width="0.9"/><rect x="4" y="0.5" width="6.5" height="7" fill="#d8d8d8"/><rect x="5" y="2" width="2" height="2" fill="#4f4f4f"/></svg>
<svg style="left:1055px;top:384px" width="9" height="9" viewBox="0 0 9 9"><path d="M0.5 0.5h8v8h-6l-2-2z" fill="#d8d8d8"/></svg>
<svg style="left:1072.5px;top:383px" width="8" height="10" viewBox="0 0 8 10"><path d="M1 2.5h6v7H1z" fill="none" stroke="#d8d8d8" stroke-width="0.9"/><path d="M0 2h8M3 0.5h2v1.5" stroke="#d8d8d8" stroke-width="0.9" fill="none"/><path d="M3 4v4M5 4v4" stroke="#d8d8d8" stroke-width="0.7"/></svg>
<!-- APPEARANCE -->
<div class="a" style="left:908px;top:395.5px;width:192px;height:20px;background:#3b3b3b"></div>
<div class="a" style="left:908px;top:398px;width:53px;height:17.5px;background:#4b4b4b"></div>
<div class="t" style="left:914px;top:404.3px;font-size:7.16px;font-weight:bold;color:#ededed">Appearance</div>
<svg style="left:1088px;top:403px" width="8" height="7" viewBox="0 0 8 7"><rect width="8" height="7" fill="#6a6a6a"/><path d="M0 2.3h8M0 4.6h8M2.7 0v7M5.3 0v7" stroke="#3b3b3b" stroke-width="0.5"/></svg>
<div class="a" style="left:908px;top:415.5px;width:192px;height:201.5px;background:#4b4b4b"></div><div class="a" style="left:1095.5px;top:416px;width:0.8px;height:199px;background:#555"></div>
<div class="a" style="left:911.5px;top:416px;width:0.6px;height:185px;background:#474747"></div>
<div class="a" style="left:912px;top:437.8px;width:184px;height:0.6px;background:#444"></div>
<div class="a" style="left:912px;top:455.1px;width:184px;height:0.6px;background:#444"></div>
<div class="a" style="left:912px;top:472.5px;width:184px;height:0.6px;background:#444"></div>
<div class="a" style="left:912px;top:489.6px;width:184px;height:0.6px;background:#444"></div>
<div class="a" style="left:912px;top:506.8px;width:184px;height:0.6px;background:#444"></div>
<div class="a" style="left:928.9px;top:438px;width:0.6px;height:85px;background:#474747"></div>
<div class="a" style="left:914px;top:422.8px;width:12.5px;height:12.2px;background:#55b4b6;border:1px solid #d8d8d8"></div>
<div class="a" style="left:912px;top:420.3px;width:184px;height:0.7px;background:#555"></div><div class="t" style="left:946.4px;top:425.9px;font-size:7.3px;font-weight:bold;color:#e8e8e8">No Selection</div>
<svg style="left:915px;top:442.9px" width="10" height="7" viewBox="0 0 10 7"><path d="M0.5 3.5Q5 -1.5 9.5 3.5Q5 8.5 0.5 3.5z" fill="#d0d0d0"/><circle cx="5" cy="3.5" r="1.6" fill="#4b4b4b"/><circle cx="5" cy="3.5" r="0.8" fill="#d0d0d0"/></svg>
<svg style="left:933.7px;top:444.4px" width="6" height="4" viewBox="0 0 6 4"><path d="M0.5 0.5l2.5 2.5 2.5-2.5" stroke="#d0d0d0" stroke-width="0.9" fill="none"/></svg>
<div class="t" style="left:946.4px;top:442.6px;font-size:7.3px;color:#dedede;text-decoration:underline dotted #888">Stroke:</div>
<div class="a" style="left:975.9px;top:441px;width:11px;height:11px;background:#fff;border:1px solid #bdbdbd"></div>
<svg style="left:975.9px;top:441px" width="11" height="11" viewBox="0 0 11 11"><path d="M1.5 9.5L9.5 1.5" stroke="#c8392b" stroke-width="1.3"/></svg>
<svg style="left:915px;top:460.1px" width="10" height="7" viewBox="0 0 10 7"><path d="M0.5 3.5Q5 -1.5 9.5 3.5Q5 8.5 0.5 3.5z" fill="#6a6a6a"/><circle cx="5" cy="3.5" r="1.6" fill="#4b4b4b"/><circle cx="5" cy="3.5" r="0.8" fill="#6a6a6a"/></svg>
<div class="t" style="left:961.9px;top:459.8px;font-size:7.73px;color:#dedede;text-decoration:underline dotted #888">Opacity:<span style="text-decoration:none"> Default</span></div>
<svg style="left:915px;top:477.3px" width="10" height="7" viewBox="0 0 10 7"><path d="M0.5 3.5Q5 -1.5 9.5 3.5Q5 8.5 0.5 3.5z" fill="#d0d0d0"/><circle cx="5" cy="3.5" r="1.6" fill="#4b4b4b"/><circle cx="5" cy="3.5" r="0.8" fill="#d0d0d0"/></svg>
<svg style="left:933.7px;top:478.8px" width="6" height="4" viewBox="0 0 6 4"><path d="M0.5 0.5l2.5 2.5 2.5-2.5" stroke="#d0d0d0" stroke-width="0.9" fill="none"/></svg>
<div class="t" style="left:946.4px;top:477px;font-size:7.5px;color:#dedede">Fill:</div>
<div class="a" style="left:975.9px;top:475.3px;width:11px;height:11px;background:#55b4b6;border:1px solid #d0d0d0"></div>
<svg style="left:915px;top:494.5px" width="10" height="7" viewBox="0 0 10 7"><path d="M0.5 3.5Q5 -1.5 9.5 3.5Q5 8.5 0.5 3.5z" fill="#6a6a6a"/><circle cx="5" cy="3.5" r="1.6" fill="#4b4b4b"/><circle cx="5" cy="3.5" r="0.8" fill="#6a6a6a"/></svg>
<div class="t" style="left:961.9px;top:494.2px;font-size:7.73px;color:#dedede">Opacity: Default</div>
<svg style="left:915px;top:511.70000000000005px" width="10" height="7" viewBox="0 0 10 7"><path d="M0.5 3.5Q5 -1.5 9.5 3.5Q5 8.5 0.5 3.5z" fill="#6a6a6a"/><circle cx="5" cy="3.5" r="1.6" fill="#4b4b4b"/><circle cx="5" cy="3.5" r="0.8" fill="#6a6a6a"/></svg>
<div class="t" style="left:946.4px;top:511.4px;font-size:7.73px;color:#dedede">Opacity: Default</div>
<div class="a" style="left:958px;top:601.3px;width:122px;height:0.6px;background:#5a5a5a"></div>
<svg style="left:915.5px;top:605px" width="9" height="9" viewBox="0 0 9 9"><rect x="0.8" y="0.8" width="7.4" height="7.4" fill="none" stroke="#d8d8d8" stroke-width="1.4"/></svg>
<svg style="left:933.3px;top:605px" width="9" height="9" viewBox="0 0 9 9"><rect x="0.6" y="0.6" width="7.8" height="7.8" fill="none" stroke="#cfcfcf" stroke-width="1"/><rect x="2.2" y="2.2" width="4.6" height="4.6" fill="#e0e0e0"/></svg>
<div class="t" style="left:951.5px;top:604px;font-size:9px;font-style:italic;font-family:'Liberation Serif',serif;color:#cfcfcf">fx.</div>
<svg style="left:1036px;top:605px" width="9" height="9" viewBox="0 0 9 9"><circle cx="4.5" cy="4.5" r="3.6" stroke="#e0e0e0" stroke-width="1.3" fill="none"/><path d="M2 2l5 5" stroke="#e0e0e0" stroke-width="1.3"/></svg>
<svg style="left:1055px;top:605px" width="8" height="9" viewBox="0 0 8 9"><path d="M0.5 0.5h7v8h-5l-2-2z" fill="#626262"/></svg>
<svg style="left:1072px;top:604px" width="8" height="10" viewBox="0 0 8 10"><path d="M1 2.5h6v7H1z" fill="none" stroke="#626262" stroke-width="0.9"/><path d="M0 2h8M3 0.5h2v1.5" stroke="#626262" stroke-width="0.9" fill="none"/></svg>
<div class="a" style="left:0;top:615.5px;width:1100px;height:1.5px;background:#1f2b28"></div>
</body></html>
